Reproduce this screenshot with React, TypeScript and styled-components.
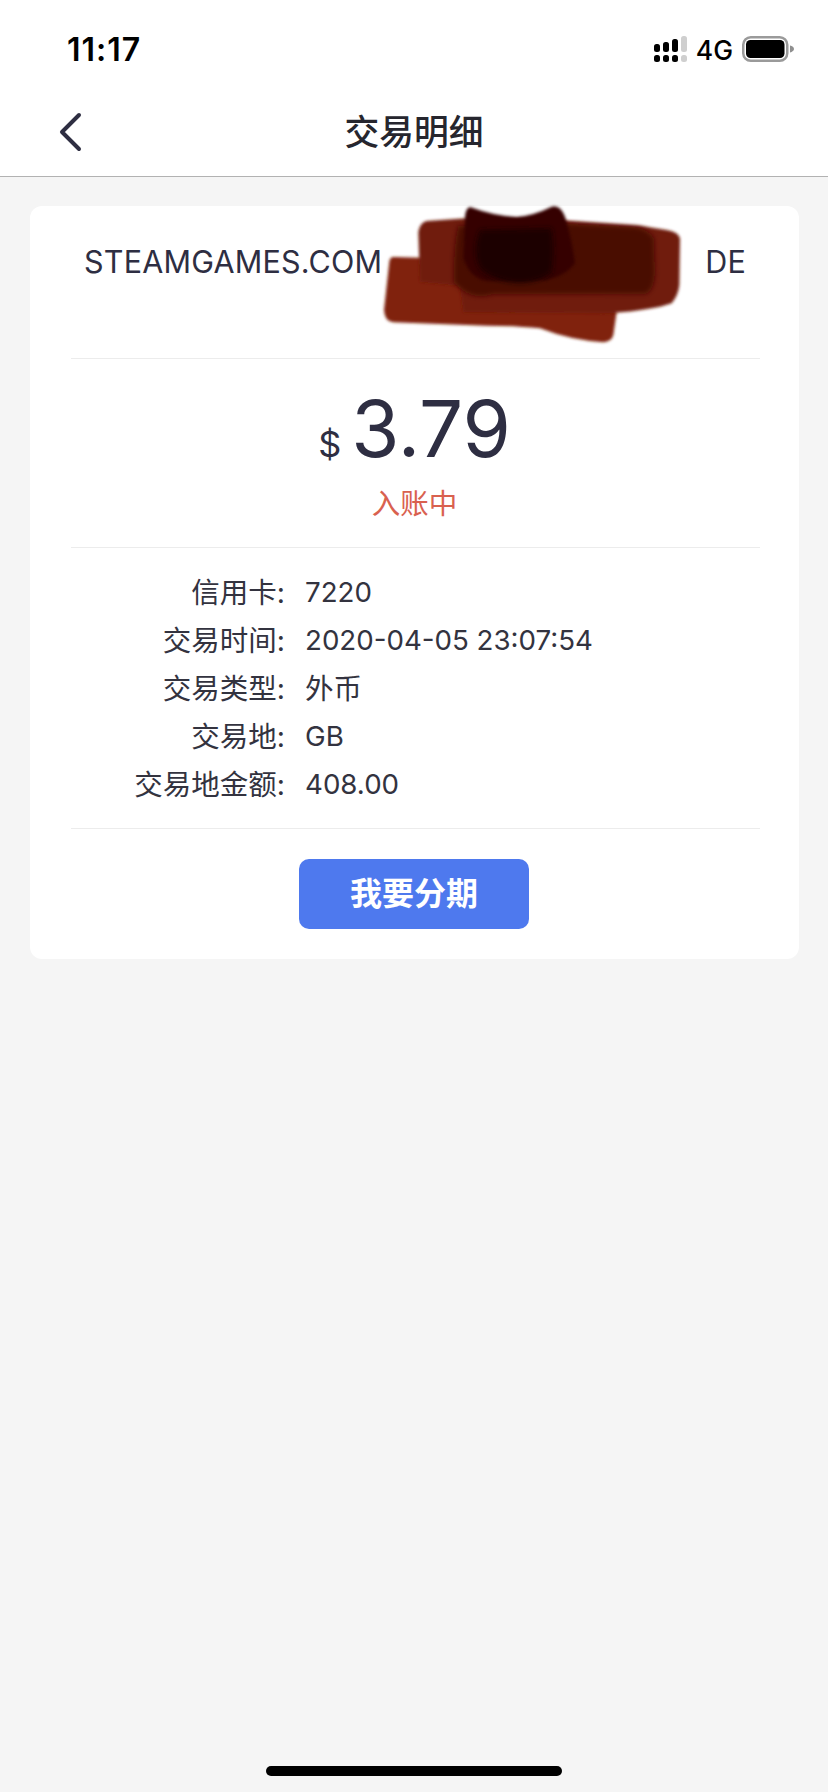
import React from "react";
import styled, { createGlobalStyle } from "styled-components";

const FONT = `Inter, "Noto Sans CJK SC", sans-serif`;
const INK = "#2e2e42";

const Global = createGlobalStyle`
  html, body { margin: 0; padding: 0; background: #f5f5f5; }
  * { box-sizing: border-box; }
`;

const Page = styled.div`
  width: 828px;
  height: 1792px;
  background: #f5f5f5;
  font-family: ${FONT};
  color: ${INK};
  position: relative;
  overflow: hidden;
`;

const Header = styled.header`
  background: #fff;
  height: 177px;
  border-bottom: 1px solid #b2b2b2;
`;

const StatusBar = styled.div`
  height: 88px;
  padding: 10px 34px 0 67px;
  display: flex;
  align-items: center;
  justify-content: space-between;
`;

const Clock = styled.span`
  font-size: 32px;
  font-weight: 600;
  color: #000;
  letter-spacing: 1px;
`;

const StatusIcons = styled.div`
  display: flex;
  align-items: center;
  gap: 9px;
`;

const Network = styled.span`
  font-size: 26.500px;
  font-weight: 500;
  color: #000;
  margin-top: 1px;
`;

const NavBar = styled.nav`
  height: 88px;
  padding: 0 0 0 59px;
  display: flex;
  align-items: center;
  position: relative;
`;

const NavTitle = styled.h1`
  position: absolute;
  left: 0;
  right: 0;
  top: 20px;
  margin: 0;
  text-align: center;
  font-size: 34.800px;
  line-height: 48px;
  font-weight: 500;
  color: #26262e;
`;

const Card = styled.section`
  margin: 29px 29px 0 30px;
  height: 753px;
  background: #fff;
  border-radius: 12px;
  padding: 0 39px 0 41px;
  display: flex;
  flex-direction: column;
`;

const Merchant = styled.div`
  height: 153px;
  padding: 31px 14px 0 13px;
  display: flex;
  justify-content: space-between;
  align-items: flex-start;
  border-bottom: 1px solid #ececec;
  font-size: 30.500px;
  line-height: 50px;
  position: relative;
  letter-spacing: 0.2px;
`;

const Scribble = styled.svg`
  position: absolute;
  left: 299px;
  top: -11px;
  width: 330px;
  height: 160px;
`;

const AmountBlock = styled.div`
  height: 189px;
  border-bottom: 1px solid #ececec;
  display: flex;
  flex-direction: column;
  align-items: center;
  padding-right: 2px;
`;

const Amount = styled.div`
  display: flex;
  align-items: baseline;
  gap: 10px;
  height: 108px;
  padding-top: 23px;
  line-height: 94px;
`;

const Currency = styled.span`
  font-size: 36px;
`;

const AmountValue = styled.span`
  font-size: 78px;
`;

const Pending = styled.div`
  font-size: 28.500px;
  line-height: 38px;
  margin-top: 18px;
  color: #d9614f;
`;

const Details = styled.dl`
  margin: 0;
  height: 281px;
  border-bottom: 1px solid #ececec;
  padding-top: 20px;
  display: grid;
  grid-template-columns: 214px 1fr;
  grid-auto-rows: 48px;
  column-gap: 20px;
  align-items: center;
  color: #33333f;
`;

const Label = styled.dt`
  text-align: right;
  white-space: nowrap;
  font-size: 28.500px;
  margin-bottom: 3px;
`;

const Value = styled.dd<{ $cjk?: boolean }>`
  margin: 0 0 ${(p) => (p.$cjk ? "3px" : "0")};
  white-space: nowrap;
  font-size: ${(p) => (p.$cjk ? "28.5px" : "27.7px")};
`;

const ActionRow = styled.div`
  display: flex;
  justify-content: center;
  padding: 30px 3px 0 0;
`;

const InstallmentButton = styled.button`
  width: 230px;
  height: 70px;
  border: 0;
  border-radius: 10px;
  background: #4e79ee;
  color: #fff;
  font-family: ${FONT};
  font-size: 32px;
  font-weight: 600;
  padding: 0;
  line-height: 66px;
`;

const HomeIndicator = styled.div`
  position: absolute;
  left: 266px;
  top: 1766px;
  width: 296px;
  height: 10px;
  border-radius: 5px;
  background: #000;
`;

const SignalIcon = () => (
  <svg width="33" height="26" viewBox="0 0 33 26" aria-hidden="true">
    <rect x="0" y="8" width="6" height="8" rx="2.5" fill="#000" />
    <rect x="9" y="6" width="6" height="10" rx="2.5" fill="#000" />
    <rect x="18" y="3" width="6" height="13" rx="2.5" fill="#000" />
    <rect x="27" y="0" width="6" height="16" rx="2.5" fill="#cfcfcf" />
    <rect x="0" y="19" width="6" height="7" rx="2.5" fill="#000" />
    <rect x="9" y="19" width="6" height="7" rx="2.5" fill="#000" />
    <rect x="18" y="19" width="6" height="7" rx="2.5" fill="#000" />
    <rect x="27" y="19" width="6" height="7" rx="2.5" fill="#cfcfcf" />
  </svg>
);

const BatteryIcon = () => (
  <svg width="52" height="26" viewBox="0 0 52 26" aria-hidden="true">
    <rect x="1.25" y="1.25" width="44" height="23.5" rx="7.5" fill="none" stroke="#9a9a9a" strokeWidth="2.5" />
    <rect x="4" y="4" width="38.5" height="18" rx="4.5" fill="#000" />
    <path d="M48 9.5c2.4.6 4 1.9 4 3.5s-1.6 2.900-4 3.500z" fill="#8f8f8f" />
  </svg>
);

const BackIcon = () => (
  <svg width="24" height="40" viewBox="0 0 24 40" aria-hidden="true">
    <path d="M20 3 L3 20 L20 37" fill="none" stroke={INK} strokeWidth="4" strokeLinecap="round" strokeLinejoin="round" />
  </svg>
);

const strokes: { fill: string; blur: string; d: string }[] = [
  {
    fill: "#80210f",
    blur: "url(#soft)",
    d: "M70 186 Q60 186 58 200 L42 345 Q44 380 70 382 L350 392 Q440 392 510 400 Q600 435 700 442 Q725 440 730 420 L740 350 L600 200 Z",
  },
  {
    fill: "#701b0c",
    blur: "url(#soft)",
    d: "M170 78 Q150 82 145 110 L150 260 L270 272 L280 352 L720 355 Q850 345 905 325 Q925 300 928 270 L930 130 Q925 110 890 105 L810 92 L560 75 L290 70 Z",
  },
  {
    fill: "#4a0a02",
    blur: "url(#softer)",
    d: "M265 92 Q250 150 252 262 Q300 320 370 298 L830 296 Q855 280 855 230 L852 130 Q830 98 790 96 L560 85 Z",
  },
  {
    fill: "#350601",
    blur: "url(#soft)",
    d: "M300 36 Q285 40 285 70 L280 190 Q300 250 350 258 L530 256 Q590 240 615 205 Q605 130 585 65 Q570 28 545 35 Q490 62 440 66 Q370 62 300 36 Z",
  },
  {
    fill: "#1b0200",
    blur: "url(#softer)",
    d: "M330 105 L545 100 Q555 170 545 232 Q510 262 450 264 Q370 260 330 220 Q305 170 330 105 Z",
  },
];

const RedactionScribble = () => (
  <Scribble viewBox="0 0 990 480" aria-hidden="true">
    <defs>
      <filter id="soft" x="-10%" y="-10%" width="120%" height="120%">
        <feGaussianBlur stdDeviation="4" />
      </filter>
      <filter id="softer" x="-10%" y="-10%" width="120%" height="120%">
        <feGaussianBlur stdDeviation="8" />
      </filter>
    </defs>
    {strokes.map((s) => (
      <path key={s.fill} d={s.d} fill={s.fill} filter={s.blur} />
    ))}
  </Scribble>
);

const rows: { label: string; value: string; cjk?: boolean }[] = [
  { label: "信用卡:", value: "7220" },
  { label: "交易时间:", value: "2020-04-05 23:07:54" },
  { label: "交易类型:", value: "外币", cjk: true },
  { label: "交易地:", value: "GB" },
  { label: "交易地金额:", value: "408.00" },
];

export default function App() {
  return (
    <Page>
      <Global />
      <Header>
        <StatusBar>
          <Clock>11:17</Clock>
          <StatusIcons>
            <SignalIcon />
            <Network>4G</Network>
            <BatteryIcon />
          </StatusIcons>
        </StatusBar>
        <NavBar>
          <BackIcon />
          <NavTitle>交易明细</NavTitle>
        </NavBar>
      </Header>
      <Card>
        <Merchant>
          <span>STEAMGAMES.COM</span>
          <span>DE</span>
          <RedactionScribble />
        </Merchant>
        <AmountBlock>
          <Amount>
            <Currency>$</Currency>
            <AmountValue>3.79</AmountValue>
          </Amount>
          <Pending>入账中</Pending>
        </AmountBlock>
        <Details>
          {rows.map((r) => (
            <React.Fragment key={r.label}>
              <Label>{r.label}</Label>
              <Value $cjk={r.cjk}>{r.value}</Value>
            </React.Fragment>
          ))}
        </Details>
        <ActionRow>
          <InstallmentButton>我要分期</InstallmentButton>
        </ActionRow>
      </Card>
      <HomeIndicator />
    </Page>
  );
}
